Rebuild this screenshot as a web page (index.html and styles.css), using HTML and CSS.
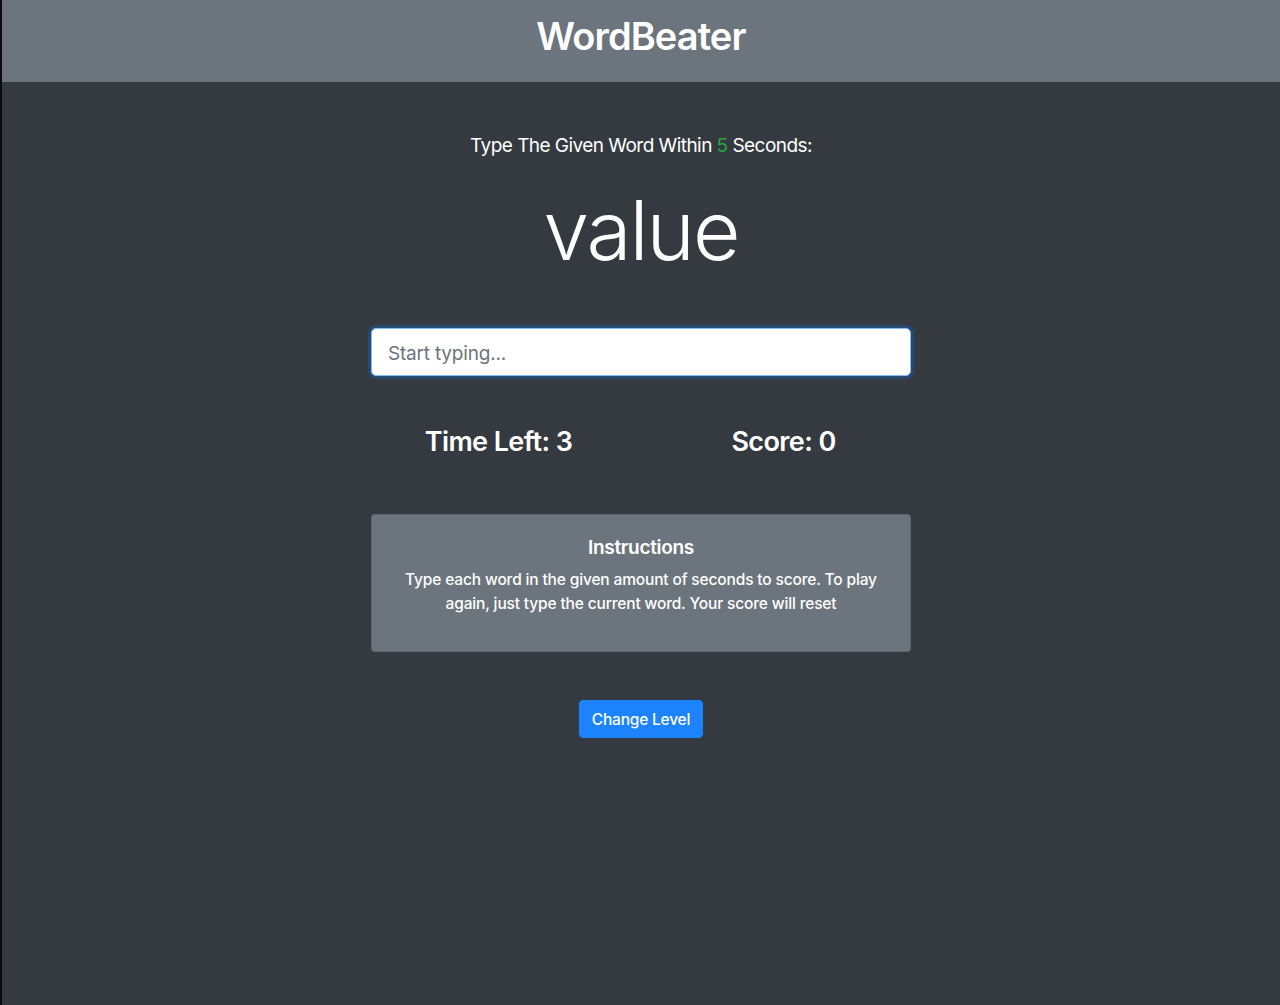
FILE: index.html
```html
<!DOCTYPE html>
<html lang="en">
<head>
<meta charset="utf-8">
<title>WordBeater</title>
<link rel="stylesheet" href="styles.css">
</head>
<body>
<div class="page">
  <header class="topbar">
    <h1 class="brand">WordBeater</h1>
  </header>
  <main class="game">
    <p class="lead">Type The Given Word Within <span class="seconds">5</span> Seconds:</p>
    <h2 class="word">value</h2>
    <input class="word-input" type="text" placeholder="Start typing..." autofocus>
    <div class="stats">
      <h3 class="stat">Time Left: <span>3</span></h3>
      <h3 class="stat">Score: <span>0</span></h3>
    </div>
    <div class="card">
      <h5 class="card-title">Instructions</h5>
      <p class="card-text">Type each word in the given amount of seconds to score. To play again, just type the current word. Your score will reset</p>
    </div>
    <div class="actions">
      <button class="btn-primary" type="button">Change Level</button>
    </div>
  </main>
</div>
</body>
</html>
```
FILE: styles.css
```css
* { box-sizing: border-box; }
html, body { margin: 0; padding: 0; }
body {
  background: #343a40;
  font-family: Inter, "Noto Sans", "Liberation Sans", sans-serif;
  color: #fff;
}
.page {
  min-height: 1005px;
  border-left: 2px solid #0b0b0c;
  background: #343a40;
}
.topbar {
  background: #6c757d;
  height: 82px;
  padding-top: 12px;
  text-align: center;
}
.brand {
  margin: 0;
  font-size: 38px;
  line-height: 48px;
  font-weight: 600;
  letter-spacing: -0.9px;
}
.game {
  width: 570px;
  margin: 49px auto 0;
  display: flex;
  flex-direction: column;
  align-items: center;
  text-align: center;
}
.lead {
  margin: 0 0 16px;
  font-size: 19px;
  line-height: 30px;
  font-weight: 400;
  letter-spacing: -0.55px;
}
.seconds { color: #28a745; }
.word {
  margin: 0 0 47px;
  font-size: 82px;
  line-height: 104px;
  font-weight: 300;
  letter-spacing: -2px;
  position: relative;
  top: 2px;
}
.word-input {
  width: 540px;
  height: 48px;
  padding: 10px 16px 8px;
  font-family: inherit;
  font-size: 19px;
  color: #495057;
  background: #fff;
  border: 1px solid #80bdff;
  border-radius: 5px;
  box-shadow: 0 0 0 3px rgba(0, 123, 255, 0.25);
  outline: none;
}
.word-input::placeholder { color: #6c757d; letter-spacing: -0.2px; }
.stats {
  width: 570px;
  display: flex;
  margin-top: 49px;
}
.stat {
  flex: 1;
  margin: 0;
  font-size: 27px;
  line-height: 34px;
  font-weight: 600;
  letter-spacing: -0.6px;
}
.card {
  width: 540px;
  margin-top: 55px;
  background: #6c757d;
  border: 1px solid rgba(0, 0, 0, 0.125);
  border-radius: 4px;
  padding: 21px 20px 19px;
}
.card-title {
  margin: 0 0 8px;
  font-size: 19px;
  line-height: 24px;
  font-weight: 600;
  letter-spacing: -0.3px;
}
.card-text {
  margin: 0 0 16px;
  font-size: 15.5px;
  line-height: 24px;
  font-weight: 500;
  letter-spacing: -0.15px;
}
.actions {
  margin-top: 48px;
}
.btn-primary {
  height: 38px;
  padding: 0 12px;
  font-family: inherit;
  font-size: 15.5px;
  font-weight: 500;
  letter-spacing: -0.2px;
  color: #fff;
  background: #1c83fc;
  border: 1px solid #1c83fc;
  border-radius: 4px;
}
```
